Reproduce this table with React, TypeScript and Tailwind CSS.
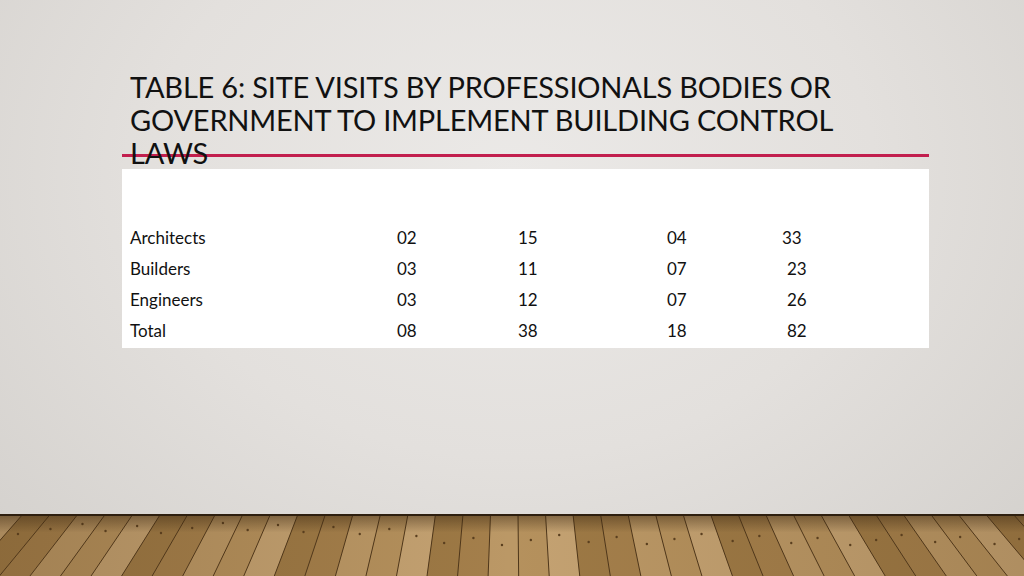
import React from "react"

const rows = [
  { name: "Architects", a: "02", b: "15", c: "04", d: "33", shift: false },
  { name: "Builders", a: "03", b: "11", c: "07", d: "23", shift: true },
  { name: "Engineers", a: "03", b: "12", c: "07", d: "26", shift: true },
  { name: "Total", a: "08", b: "38", c: "18", d: "82", shift: true },
]

// wooden floor strip along the bottom
function Floor() {
  const vx = 512
  const vy = -560
  const lines: { x1: number; x2: number }[] = []
  for (let k = -24; k <= 24; k++) {
    const x1 = vx + k * 27.5 + 6
    const x2 = vx + (x1 - vx) * ((62 - vy) / -vy)
    lines.push({ x1, x2 })
  }
  const nails: { x: number; y: number }[] = []
  for (let k = -23; k <= 23; k++) {
    const x1 = vx + k * 27.5 + 18
    const f = (y: number) => vx + (x1 - vx) * ((y - vy) / -vy)
    const y1 = 20 + ((k * 7 + 30) % 12)
    nails.push({ x: f(y1), y: y1 })
  }
  const tones = ["#c4a272", "#a47f4b", "#b5915d", "#9d7945", "#bb9866"]
  return (
    <svg viewBox="0 0 1024 62" preserveAspectRatio="none" className="block h-[62px] w-full">
      <defs>
        <linearGradient id="shade" x1="0" y1="0" x2="0" y2="1">
          <stop offset="0" stopColor="#3b2812" stopOpacity="0.5" />
          <stop offset="0.3" stopColor="#3b2812" stopOpacity="0" />
          <stop offset="1" stopColor="#000" stopOpacity="0" />
        </linearGradient>
        <linearGradient id="side" x1="0" y1="0" x2="1" y2="0">
          <stop offset="0" stopColor="#5a3e1c" stopOpacity="0.25" />
          <stop offset="0.5" stopColor="#5a3e1c" stopOpacity="0" />
          <stop offset="1" stopColor="#5a3e1c" stopOpacity="0.2" />
        </linearGradient>
      </defs>
      <rect width="1024" height="62" fill="#a98550" />
      {lines.map((l, i) => (
        <polygon
          key={`p-${i}`}
          points={`${l.x1},0 ${l.x1 + 27.5},0 ${l.x2 + 30.5},62 ${l.x2},62`}
          fill={tones[(i * 3) % tones.length]}
        />
      ))}
      {lines.map((l, i) => (
        <line key={`l-${i}`} x1={l.x1} y1="0" x2={l.x2} y2="62" stroke="#4e361a" strokeWidth="1" />
      ))}
      {nails.map((n, i) => (
        <circle key={`n-${i}`} cx={n.x} cy={n.y} r="1.2" fill="#5a3f1f" />
      ))}
      <rect width="1024" height="62" fill="url(#side)" />
      <rect width="1024" height="62" fill="url(#shade)" />
      <rect width="1024" height="2" fill="#2e1f0f" />
    </svg>
  )
}

export default function App() {
  return (
    <div
      className="flex h-[576px] w-[1024px] flex-col overflow-hidden bg-[radial-gradient(ellipse_at_50%_30%,#ebe9e7_0%,#e3e0dd_50%,#d3d0cc_100%)] text-[#111]"
      style={{ fontFamily: "Lato, 'Open Sans', sans-serif" }}
    >
      <div className="flex-1 pl-[122px] pr-[95px] pt-[70px]">
        {/* Title */}
        <h1 className="pl-2 text-[29px] leading-[33px] font-normal tracking-[-0.2px] uppercase">
          Table 6: Site visits by professionals bodies or
          <br />
          government to implement building control
          <br />
          laws
        </h1>
        <div className="-mt-[15px] h-[3px] w-[807px] bg-[#c21f4e]" />

        {/* Table */}
        <div className="mt-[12px] w-[807px] bg-white pb-[2px] pt-[53px] text-[17px]">
          {rows.map((r) => (
            <div
              key={r.name}
              className="grid h-[31px] grid-cols-[267px_121px_149px_115px_1fr] items-center pl-2"
            >
              <span>{r.name}</span>
              <span>{r.a}</span>
              <span>{r.b}</span>
              <span>{r.c}</span>
              <span className={r.shift ? "pl-[5px]" : ""}>{r.d}</span>
            </div>
          ))}
        </div>
      </div>
      <Floor />
    </div>
  )
}
